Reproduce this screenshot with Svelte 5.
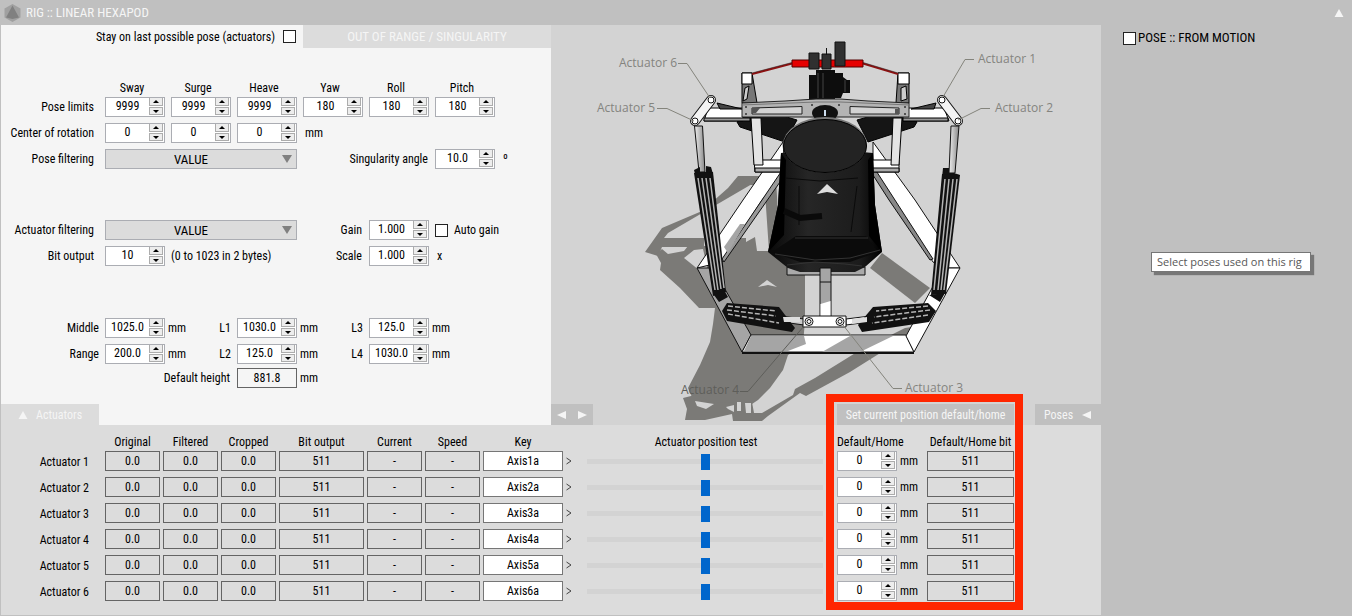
<script>
	const axes = ['Sway', 'Surge', 'Heave', 'Yaw', 'Roll', 'Pitch'];
	const filters = ['VALUE', 'LOW PASS', 'NONE'];

	let limits = $state(['9999', '9999', '9999', '180', '180', '180']);
	let center = $state(['0', '0', '0']);
	let form = $state({
		angle: '10.0',
		gain: '1.000',
		bits: '10',
		scale: '1.000',
		middle: '1025.0',
		range: '200.0',
		l1: '1030.0',
		l2: '125.0',
		l3: '125.0',
		l4: '1030.0'
	});
	let poseFilter = $state('VALUE');
	let actuatorFilter = $state('VALUE');
	let stay = $state(false);
	let autoGain = $state(false);
	let fromMotion = $state(false);

	let actuators = $state(
		[1, 2, 3, 4, 5, 6].map((n) => ({
			n,
			original: '0.0',
			filtered: '0.0',
			cropped: '0.0',
			bit: 511,
			key: 'Axis' + n + 'a',
			test: 50,
			home: '0',
			homeBit: 511
		}))
	);

	// keeps the number of decimals the field already shows
	function step(obj, key, dir) {
		const decimals = (String(obj[key]).split('.')[1] || '').length;
		obj[key] = (Number(obj[key]) + dir).toFixed(decimals);
	}

	function setHome() {
		actuators.forEach((a) => (a.home = String(a.test - 50)));
	}
</script>

{#snippet spin(obj, key, id, name)}
	<span class="spin">
		<input {id} type="text" aria-label={name} bind:value={obj[key]}>
		<span class="arrows">
			<button aria-label="Increase" onclick={() => step(obj, key, 1)}>
				<svg viewBox="0 0 6 3"><path d="M0 3 3 0 6 3z"/></svg>
			</button>
			<button aria-label="Decrease" onclick={() => step(obj, key, -1)}>
				<svg viewBox="0 0 6 3"><path d="M0 0 3 3 6 0z"/></svg>
			</button>
		</span>
	</span>
{/snippet}

{#snippet cylinder(points, lines, dash)}
	<polygon {points} fill="#111"/>
	<path d={lines} stroke="#b4b4b4" stroke-width="1.500" stroke-dasharray={dash} fill="none"/>
{/snippet}

<div class="rig">
	<header>
		<svg class="logo" viewBox="0 0 17 18">
			<path d="M8.500 0 16.500 4.500V13.500L8.500 18 .5 13.500V4.500z" fill="#a0a0a0"/>
			<path d="M8.500 1.500 15 13.500 8.500 15 2 13.500z" fill="#808080"/>
		</svg>
		<h1>RIG :: LINEAR HEXAPOD</h1>
		<button class="collapse" aria-label="Collapse">
			<svg viewBox="0 0 10 9"><path d="M0 9 5 0 10 9z"/></svg>
		</button>
	</header>

	<div class="body">
		<main>
			<div class="top">
				<section class="settings">
					<div class="status">
						<label class="stay">
							Stay on last possible pose (actuators)
							<input type="checkbox" bind:checked={stay}>
						</label>
						<span class="alert">OUT OF RANGE / SINGULARITY</span>
					</div>

					<div class="fields names">
						<span></span>
						{#each axes as axis}
							<span>{axis}</span>
						{/each}
					</div>
					<div class="fields">
						<label class="name" for="limit0">Pose limits</label>
						{#each axes as axis, i}
							{@render spin(limits, i, 'limit' + i, axis + ' limit')}
						{/each}

						<label class="name" for="center0">Center of rotation</label>
						{#each center as c, i}
							{@render spin(center, i, 'center' + i, axes[i] + ' center')}
						{/each}
						<span class="unit">mm</span>

						<label class="name" for="poseFilter">Pose filtering</label>
						<span class="drop">
							<select id="poseFilter" bind:value={poseFilter}>
								{#each filters as f}<option>{f}</option>{/each}
							</select>
						</span>
						<label class="pair end" for="angle">Singularity angle</label>
						{@render spin(form, 'angle', 'angle')}
						<span class="unit">º</span>
					</div>

					<div class="fields group">
						<label class="name" for="actFilter">Actuator filtering</label>
						<span class="drop">
							<select id="actFilter" bind:value={actuatorFilter}>
								{#each filters as f}<option>{f}</option>{/each}
							</select>
						</span>
						<label class="end" for="gain">Gain</label>
						{@render spin(form, 'gain', 'gain')}
						<label class="check pair">
							<input type="checkbox" bind:checked={autoGain}>
							Auto gain
						</label>

						<label class="name" for="bits">Bit output</label>
						{@render spin(form, 'bits', 'bits')}
						<span class="pair">(0 to 1023 in 2 bytes)</span>
						<label class="end" for="scale">Scale</label>
						{@render spin(form, 'scale', 'scale')}
						<span class="unit">x</span>
					</div>

					<div class="fields group">
						<label class="first" for="middle">Middle</label>
						{@render spin(form, 'middle', 'middle')}
						<span class="split">mm <label for="l1">L1</label></span>
						{@render spin(form, 'l1', 'l1')}
						<span class="split">mm <label for="l3">L3</label></span>
						{@render spin(form, 'l3', 'l3')}
						<span class="split">mm</span>

						<label class="first" for="range">Range</label>
						{@render spin(form, 'range', 'range')}
						<span class="split">mm <label for="l2">L2</label></span>
						{@render spin(form, 'l2', 'l2')}
						<span class="split">mm <label for="l4">L4</label></span>
						{@render spin(form, 'l4', 'l4')}
						<span class="split">mm</span>
					</div>
					<div class="fields height">
						<span></span>
						<span class="pair end">Default height</span>
						<output class="box">881.8</output>
						<span class="split">mm</span>
					</div>

					<button class="tab">
						<svg viewBox="0 0 10 9"><path d="M0 9 5 0 10 9z"/></svg>
						Actuators
					</button>
				</section>

				<section class="view">
					<svg class="scene" viewBox="551 25 550 400" preserveAspectRatio="xMidYMin meet">
						<defs>
							<linearGradient id="rod" x1="0" x2="1">
								<stop offset="0" stop-color="#eee"/>
								<stop offset="1" stop-color="#888"/>
							</linearGradient>
							<linearGradient id="seat" x1="0" x2="1">
								<stop offset="0" stop-color="#080808"/>
								<stop offset=".35" stop-color="#262626"/>
								<stop offset=".8" stop-color="#1c1c1c"/>
								<stop offset="1" stop-color="#000"/>
							</linearGradient>
						</defs>

						<!-- shadow on the floor -->
						<g fill="#7b7a77">
							<path d="M738 176H762L752 184 716 205 668 233 664 238H704V247H662L658 256 645 252 662 228 702 211 728 188z"/>
							<path d="M661 263 656 254 662 249 668 254 684 251 688 246H712L728 252 735 238H746V242L755 237 757 251H769L764 178H776L780 252H805V320L803 345 788 355 783 370 770 388 758 400 752 404H695L688 388 700 365 710 342 713 324 715 308H699L680 288 660 270z"/>
							<path d="M683 398 695 395 715 403 752 402 754 413 762 413 793 395 795 389 815 378 857 352 905 328 925 325 893 345 850 372 806 396 800 393 768 416 762 421H733L732 414 705 420H685L687 409z"/>
							<path d="M882 253 870 268 915 303 930 288z"/>
							<path d="M742 176 758 176 764 185H746z"/>
						</g>
						<g fill="#d3d3d3">
							<path d="M684 258 694 250 703 249 707 266 706 276 694 266z"/>
							<path d="M695 401 714 404 706 409 697 406z"/>
							<path d="M726 407 734 405V412L728 409zM737 402H741V411H737zM745 403H751V413H746z"/>
							<path d="M758 287 767 280 777 287 768 285z"/>
						</g>

						<!-- base frame -->
						<g stroke="#111" stroke-width="1" stroke-linejoin="round">
							<path d="M783 142 743 200 697 268 722 262 762 200 785 172z" fill="#fff"/>
							<path d="M785 166 722 259 724 262 787 172z" fill="#999"/>
							<path d="M873 142 915 200 960 268H943L933 262 893 200 873 172z" fill="#fff"/>
							<path d="M873 166 893 197 933 259 930 260 889 200 871 172z" fill="#888"/>
							<path d="M697 268H713L751 335 742 352z" fill="#a5a5a5"/>
							<path d="M742 352 751 335H906L914 352z" fill="#fff"/>
							<path d="M914 352 906 336 943 268H960z" fill="#fff"/>
							<path d="M742 353H914" stroke-width="2"/>
						</g>
						<path d="M751 336H804L806 344 788 351H744z" fill="#a5a5a5"/>
						<path d="M860 352 893 336H850L822 352z" fill="#a5a5a5"/>
						<path d="M724 247 740 224 745 224 728 253z" fill="#a5a5a5"/>

						<!-- rear actuators and posts -->
						<g stroke="#000" stroke-width="1">
							<path d="M737 122 756 108 797 120 785 142 740 127z" fill="#151515"/>
							<path d="M917 122 900 108 857 120 868 142 914 127z" fill="#151515"/>
							<path d="M754 160H785V172H755z" fill="#fff"/>
							<path d="M755 168H785V172H755z" fill="#aaa"/>
							<path d="M871 160H899V172H871z" fill="#fff"/>
							<path d="M871 168H899V172H871z" fill="#aaa"/>
							<path d="M751 118H761L763 165H754z" fill="#e4e4e4"/>
							<path d="M893 118H902L899 165H891z" fill="#e4e4e4"/>
							<path d="M708 108H743V121H704z" fill="#fff"/>
							<path d="M704 118H750V121H704z" fill="#999"/>
							<path d="M909 108H944L949 121H903V108z" fill="#fff"/>
							<path d="M903 118H948V121H903z" fill="#999"/>
							<path d="M717 103 742 109H720z" fill="#444"/>
							<path d="M936 103 911 109H934z" fill="#444"/>
							<path d="M742 73H752L757 103H742z" fill="#777"/>
							<path d="M898 73H909V103H896z" fill="#777"/>
							<path d="M742 73H752V84H742zM898 73H909V84H898z" fill="#fff"/>
							<path d="M745 88 749 86 747 99 743 101zM901 88 906 86 907 99 901 101z" fill="#ccc"/>
						</g>

						<!-- handlebar and steering column -->
						<path d="M752 74 792 63.500M863 63.500 898 74" stroke="#8c1010" stroke-width="2"/>
						<path d="M752 73 792 62.500M863 62.500 898 73" stroke="#222" stroke-width=".5"/>
						<path d="M792 60H863V67H792z" fill="#e60000" stroke="#500"/>
						<path d="M809 75H816V101H809zM816 70H835V102H816zM835 73H843V77L847 80H850V93H843L841 98H835z" fill="#0d0d0d"/>
						<path d="M809 53H819V69H809zM822 54H831V69H822zM835 42H845V66H835z" fill="#303030" stroke="#111"/>
						<path d="M826.500 48V55" stroke="#111"/>
						<path d="M818 73V98M823 73V98M845 80V92" stroke="#444"/>

						<!-- cross plate -->
						<path d="M742 103 785 101 816 99H840L868 101 909 103V117H742z" fill="#b4b4b4" stroke="#222"/>
						<path d="M742 105 816 102H840L909 105" stroke="#777" fill="none"/>
						<path d="M752 108 802 106.500V114H752zM850 106.500 899 108V114H850z" fill="#d3d3d3" stroke="#222"/>
						<path d="M752 108H760L756 113H752zM895 109H899V114H895z" fill="#555"/>
						<ellipse cx="825" cy="113" rx="13" ry="8" fill="#111"/>
						<path d="M825 110V116" stroke="#cde" stroke-width="2"/>
						<g fill="#333">
							<circle cx="746" cy="107" r="1"/><circle cx="746" cy="114" r="1"/>
							<circle cx="812" cy="105" r="1"/><circle cx="839" cy="105" r="1"/>
							<circle cx="905" cy="107" r="1"/><circle cx="905" cy="114" r="1"/>
						</g>

						<!-- seat -->
						<path d="M787 267H865V275H787z" fill="#aaa" stroke="#111"/>
						<path d="M781 153 789 152H862L873 153 875 205 882 252 865 267 855 272H800L788 268 768 252 778 205z" fill="url(#seat)"/>
						<path d="M781 153 778 205 768 252 784 235 786 160zM873 153 875 205 882 252 869 236 868 160z" fill="#000"/>
						<path d="M796 236H866L878 252 850 262H800L772 252z" fill="#0b0b0b"/>
						<path d="M795 238H868M775 254 815 260 850 258 880 250M787 265 815 262 845 264 862 266" stroke="#333" fill="none"/>
						<path d="M784 211 800 218 822 216" stroke="#0a0a0a" stroke-width="6" fill="none"/>
						<path d="M785 178 820 181 858 178M799 186V225M857 186 851 232" stroke="#0a0a0a" fill="none"/>
						<ellipse cx="825" cy="145" rx="42" ry="28" fill="#777"/>
						<ellipse cx="825" cy="146" rx="41.500" ry="26.500" fill="#232323" stroke="#000"/>
						<path d="M817 194 827 184 838 194 827 192z" fill="#ddd"/>

						<!-- pedestal -->
						<path d="M820 268H831V317H820z" fill="#a5a5a5" stroke="#111"/>
						<path d="M820.500 304 830.500 301V316.500H820.500z" fill="#fff"/>
						<path d="M820 282H831" stroke="#111"/>

						<!-- side actuators -->
						<path d="M694.500 126 702.500 126 705 172H699z" fill="url(#rod)" stroke="#111"/>
						<path d="M951 126 959 126 955 173H949z" fill="url(#rod)" stroke="#111"/>
						<path d="M694 170 700 167V172H706V166L711 167 713 174H695zM943 168H949V173H954L960 175 958 178H942z" fill="#111"/>
						{@render cylinder('694,173 713,172 726,292 713,296', 'M698 178 715 290M702 178 718 290M706 178 721 289M710 178 724 288')}
						{@render cylinder('942,174 960,175 946,294 931,295', 'M945 179 934 290M949 179 938 290M953 179 941 290M957 179 944 290')}
						<path d="M714 295 724 290 728 297 719 302zM929 295 945 293 940 302z" fill="#111"/>
						<g stroke="#111" stroke-width="10" stroke-linecap="round">
							<path d="M711 100 695 121M942 100 958 121"/>
							<path d="M711 100 695 121M942 100 958 121" stroke="#f4f4f4" stroke-width="8"/>
						</g>

						<!-- front actuators -->
						<path d="M780 316 804 319V325L782 322z" fill="#ccc" stroke="#111"/>
						<path d="M870 316 846 319V325L869 322z" fill="#fff" stroke="#111"/>
						{@render cylinder('722,311 727,303 779,307 795,328 792,332 727,321', 'M728 306 776 311M727 310 776 316M728 314 779 323', '5 2')}
						{@render cylinder('936,311 928,303 873,307 858,325 862,332 929,322', 'M928 306 876 311M930 310 874 317M928 315 872 323', '5 2')}
						<path d="M783 317H800V322L784 322zM867 317 852 319V324L867 322z" fill="#ddd"/>
						<path d="M803 316H846V327H803z" fill="#fff" stroke="#111"/>
						<g fill="#fff" stroke="#111">
							<circle cx="711" cy="100" r="3"/><circle cx="695" cy="121" r="3"/>
							<circle cx="942" cy="100" r="3"/><circle cx="958" cy="121" r="3"/>
							<circle cx="809" cy="321.500" r="4"/><circle cx="840" cy="321.500" r="4"/>
							<circle cx="809" cy="321.500" r="2"/><circle cx="840" cy="321.500" r="2"/>
						</g>

						<!-- callouts -->
						<g fill="none" stroke="#84847c">
							<path d="M678 63.500H687L710 98M657 108.500H667L694 121M974 59.500H965L943 97M990 108.500H981L958 120M902 388.500H893L843 325"/>
							<path d="M740 391.500H748L804 326" stroke="#5e5e5a"/>
						</g>
						<g class="callout">
							<text x="619" y="67">Actuator 6</text>
							<text x="597" y="112">Actuator 5</text>
							<text x="978" y="63">Actuator 1</text>
							<text x="995" y="112">Actuator 2</text>
							<text class="shaded" x="681" y="394">Actuator 4</text>
							<text x="905" y="392">Actuator 3</text>
						</g>
					</svg>
					<div class="bar">
						<button class="nav" aria-label="Previous view">
							<svg viewBox="0 0 9 8"><path d="M9 0V8L0 4z"/></svg>
						</button>
						<button class="nav" aria-label="Next view">
							<svg viewBox="0 0 9 8"><path d="M0 0V8L9 4z"/></svg>
						</button>
						<button class="set" onclick={setHome}>Set current position default/home</button>
						<button class="poses">
							Poses
							<svg viewBox="0 0 9 8"><path d="M9 0V8L0 4z"/></svg>
						</button>
					</div>
				</section>
			</div>

			<section class="actuators">
				<table>
					<colgroup>
						<col class="c-name"><col class="c-val"><col class="c-val"><col class="c-val">
						<col class="c-bit"><col class="c-val"><col class="c-val"><col class="c-key">
						<col><col class="c-home"><col class="c-home"><col class="c-rest">
					</colgroup>
					<thead>
						<tr>
							<th></th>
							<th>Original</th>
							<th>Filtered</th>
							<th>Cropped</th>
							<th>Bit output</th>
							<th>Current</th>
							<th>Speed</th>
							<th class="key">Key</th>
							<th class="test">Actuator position test</th>
							<th class="home">Default/Home</th>
							<th>Default/Home bit</th>
							<th></th>
						</tr>
					</thead>
					<tbody>
						{#each actuators as a (a.n)}
							<tr>
								<th scope="row">Actuator {a.n}</th>
								<td><output class="box">{a.original}</output></td>
								<td><output class="box">{a.filtered}</output></td>
								<td><output class="box">{a.cropped}</output></td>
								<td><output class="box">{a.bit}</output></td>
								<td><output class="box">-</output></td>
								<td><output class="box">-</output></td>
								<td>
									<div class="cell">
										<input class="axis" type="text" aria-label="Key {a.n}" bind:value={a.key}>
										<button class="more" aria-label="Edit key {a.n}">
											<svg viewBox="0 0 6 8"><path d="M.5 1 5 4 .5 7"/></svg>
										</button>
									</div>
								</td>
								<td class="test">
									<input type="range" min="0" max="100" aria-label="Position test {a.n}" bind:value={a.test}>
								</td>
								<td>
									<div class="cell">
										{@render spin(a, 'home', 'home' + a.n, 'Default home ' + a.n)}
										<span>mm</span>
									</div>
								</td>
								<td><output class="box">{a.homeBit}</output></td>
								<td></td>
							</tr>
						{/each}
					</tbody>
				</table>
				<div class="mark"></div>
			</section>
		</main>

		<aside>
			<label class="motion">
				<input type="checkbox" bind:checked={fromMotion}>
				POSE :: FROM MOTION
			</label>
			<div class="tip" role="tooltip">Select poses used on this rig</div>
		</aside>
	</div>
</div>

<style>
	:global(body) {
		background: #c0c0c0;
	}
	.rig {
		min-height: 100vh;
		box-sizing: border-box;
		padding: 0 0 1px 1px;
		background: #c0c0c0;
		color: #000;
		font: 12px/20px "Roboto Condensed", "Liberation Sans", sans-serif;
		white-space: nowrap;
	}
	input, select, button {
		box-sizing: border-box;
		margin: 0;
		padding: 0;
		border: 0;
		border-radius: 0;
		outline: none;
		background: none;
		color: inherit;
		font: inherit;
	}
	svg {
		display: block;
		fill: currentColor;
	}
	header {
		display: flex;
		align-items: center;
		height: 25px;
		padding: 0 8px 0 3px;
		color: #f5f5f5;
	}
	.logo {
		width: 17px;
		height: 18px;
	}
	h1 {
		flex: 1;
		margin: 0 0 0 5px;
		font-size: 13px;
		font-weight: normal;
	}
	.collapse svg, .tab svg {
		width: 10px;
		height: 8px;
	}
	.body {
		display: flex;
	}
	main {
		flex: 1;
	}
	.top {
		display: grid;
		grid-template-columns: 1fr 1fr;
	}
	.settings {
		display: flex;
		flex-direction: column;
		background: #f5f5f5;
	}
	.status {
		display: flex;
		height: 23px;
		margin-bottom: 31px;
	}
	.stay {
		display: flex;
		align-items: center;
		justify-content: flex-end;
		gap: 8px;
		width: 295px;
		margin-right: 7px;
	}
	.alert {
		flex: 1;
		background: #dcdcdc;
		color: #f5f5f5;
		font-size: 13px;
		line-height: 23px;
		text-align: center;
	}
	input[type="checkbox"] {
		appearance: none;
		width: 13px;
		height: 13px;
		border: 1px solid #222;
		background: #fff;
	}
	input[type="checkbox"]:checked {
		box-shadow: inset 0 0 0 2px #fff;
		background: #0066cc;
	}
	.fields {
		display: grid;
		grid-template-columns: 98px repeat(7, 60px);
		grid-auto-rows: 20px;
		gap: 6px;
		width: 0;
	}
	.names {
		grid-auto-rows: 18px;
		line-height: 18px;
		text-align: center;
	}
	.names span {
		padding-right: 6px;
	}
	.group {
		margin-top: 51px;
	}
	.group + .group {
		margin-top: 52px;
	}
	.height {
		margin-top: 4px;
	}
	.name, .first {
		grid-column: 1;
		padding-right: 5px;
		text-align: right;
	}
	.first {
		padding-right: 0;
	}
	.end {
		padding-right: 1px;
		text-align: right;
	}
	.pair {
		grid-column: span 2;
	}
	.unit {
		padding-left: 2px;
	}
	.check {
		display: flex;
		align-items: center;
		gap: 6px;
	}
	.split {
		display: flex;
		justify-content: space-between;
		margin-left: -3px;
	}
	.spin {
		display: flex;
		box-sizing: border-box;
		width: 60px;
		height: 20px;
		padding-right: 1px;
		border: 1px solid #abadb3;
		background: #fff;
		line-height: 16px;
	}
	.spin input {
		flex: 1;
		width: 0;
		height: 16px;
		text-align: center;
	}
	.arrows {
		display: flex;
		flex-direction: column;
		gap: 1px;
		width: 14px;
	}
	.arrows button {
		display: flex;
		align-items: center;
		justify-content: center;
		height: 8px;
		border: 1px solid #acacac;
		border-top-width: 0;
		background: #ededed;
		color: #000;
	}
	.arrows button + button {
		border-top-width: 1px;
	}
	.arrows svg {
		width: 6px;
		height: 3px;
	}
	.drop {
		position: relative;
		grid-column: span 3;
	}
	.drop select {
		appearance: none;
		width: 100%;
		height: 20px;
		padding-right: 20px;
		border: 1px solid #abadb3;
		background: #dcdcdc;
		font-size: 13px;
		text-align: center;
		text-align-last: center;
	}
	.drop::after {
		content: '';
		position: absolute;
		top: 6px;
		right: 5px;
		border: 5px solid transparent;
		border-top: 8px solid #808080;
		border-bottom: 0;
		pointer-events: none;
	}
	.box {
		display: block;
		box-sizing: border-box;
		height: 20px;
		border: 1px solid #646464;
		line-height: 19px;
		text-align: center;
	}
	.tab {
		display: flex;
		align-items: center;
		gap: 8px;
		width: 98px;
		height: 21px;
		margin-top: 16px;
		padding-left: 17px;
		background: #dcdcdc;
		color: #f5f5f5;
	}
	.view {
		display: grid;
		background: #d3d3d3;
	}
	.scene {
		grid-area: 1 / 1;
		width: 100%;
		height: 400px;
	}
	.callout {
		fill: #84847f;
		font: 12px "Open Sans", "Noto Sans", sans-serif;
	}
	.shaded {
		fill: #5e5e5a;
	}
	.bar {
		display: flex;
		grid-area: 1 / 1;
		align-self: end;
		height: 21px;
		color: #f5f5f5;
	}
	.bar button {
		background: #c0c0c0;
	}
	.bar svg {
		width: 9px;
		height: 8px;
	}
	.nav {
		display: flex;
		align-items: center;
		justify-content: center;
		width: 21px;
	}
	.set {
		width: 177px;
		margin: 0 21px 0 auto;
	}
	.poses {
		display: flex;
		align-items: center;
		justify-content: space-between;
		width: 66px;
		padding: 0 10px 0 9px;
	}
	.actuators {
		position: relative;
		padding-bottom: 8px;
		background: #dcdcdc;
	}
	table {
		width: 100%;
		table-layout: fixed;
		border-spacing: 0;
	}
	th, td {
		height: 20px;
		padding: 0 3px 6px 0;
		font-weight: normal;
		text-align: center;
	}
	thead th {
		height: 18px;
		padding: 8px 3px 0 0;
		line-height: 18px;
	}
	th[scope="row"] {
		height: 18px;
		padding: 2px 16px 6px 0;
		line-height: 18px;
		text-align: right;
	}
	th.key {
		padding-right: 24px;
	}
	th.home {
		padding-right: 30px;
	}
	.test {
		padding-right: 14px;
	}
	th.test {
		padding-right: 12px;
	}
	.c-name, .c-key { width: 104px; }
	.c-val { width: 58px; }
	.c-bit { width: 88px; }
	.c-home { width: 90px; }
	.c-rest { width: 84px; }
	.cell {
		display: flex;
		gap: 3px;
	}
	.axis {
		width: 80px;
		height: 20px;
		border: 1px solid #767676;
		background: #fff;
		text-align: center;
	}
	.more svg {
		width: 6px;
		height: 8px;
		fill: none;
		stroke: #444;
	}
	input[type="range"] {
		display: block;
		appearance: none;
		width: 100%;
		height: 20px;
	}
	input[type="range"]::-webkit-slider-runnable-track {
		height: 5px;
		background: #d3d3d3;
	}
	input[type="range"]::-webkit-slider-thumb {
		appearance: none;
		width: 9px;
		height: 16px;
		margin-top: -5px;
		background: #0066cc;
	}
	.mark {
		position: absolute;
		top: -31px;
		right: 78px;
		box-sizing: border-box;
		width: 197px;
		height: 216px;
		border: 8px solid #ff2600;
		pointer-events: none;
	}
	aside {
		position: relative;
		width: 251px;
	}
	.motion {
		display: flex;
		align-items: center;
		gap: 2px;
		padding: 3px 0 0 22px;
		font-size: 13px;
	}
	.tip {
		position: absolute;
		top: 227px;
		left: 50px;
		padding: 0 8px 0 5px;
		border: 1px solid #767676;
		background: #fff;
		box-shadow: 3px 3px 1px #777;
		color: #575757;
		font: 11px/18px "Open Sans", "Noto Sans", sans-serif;
	}
</style>
